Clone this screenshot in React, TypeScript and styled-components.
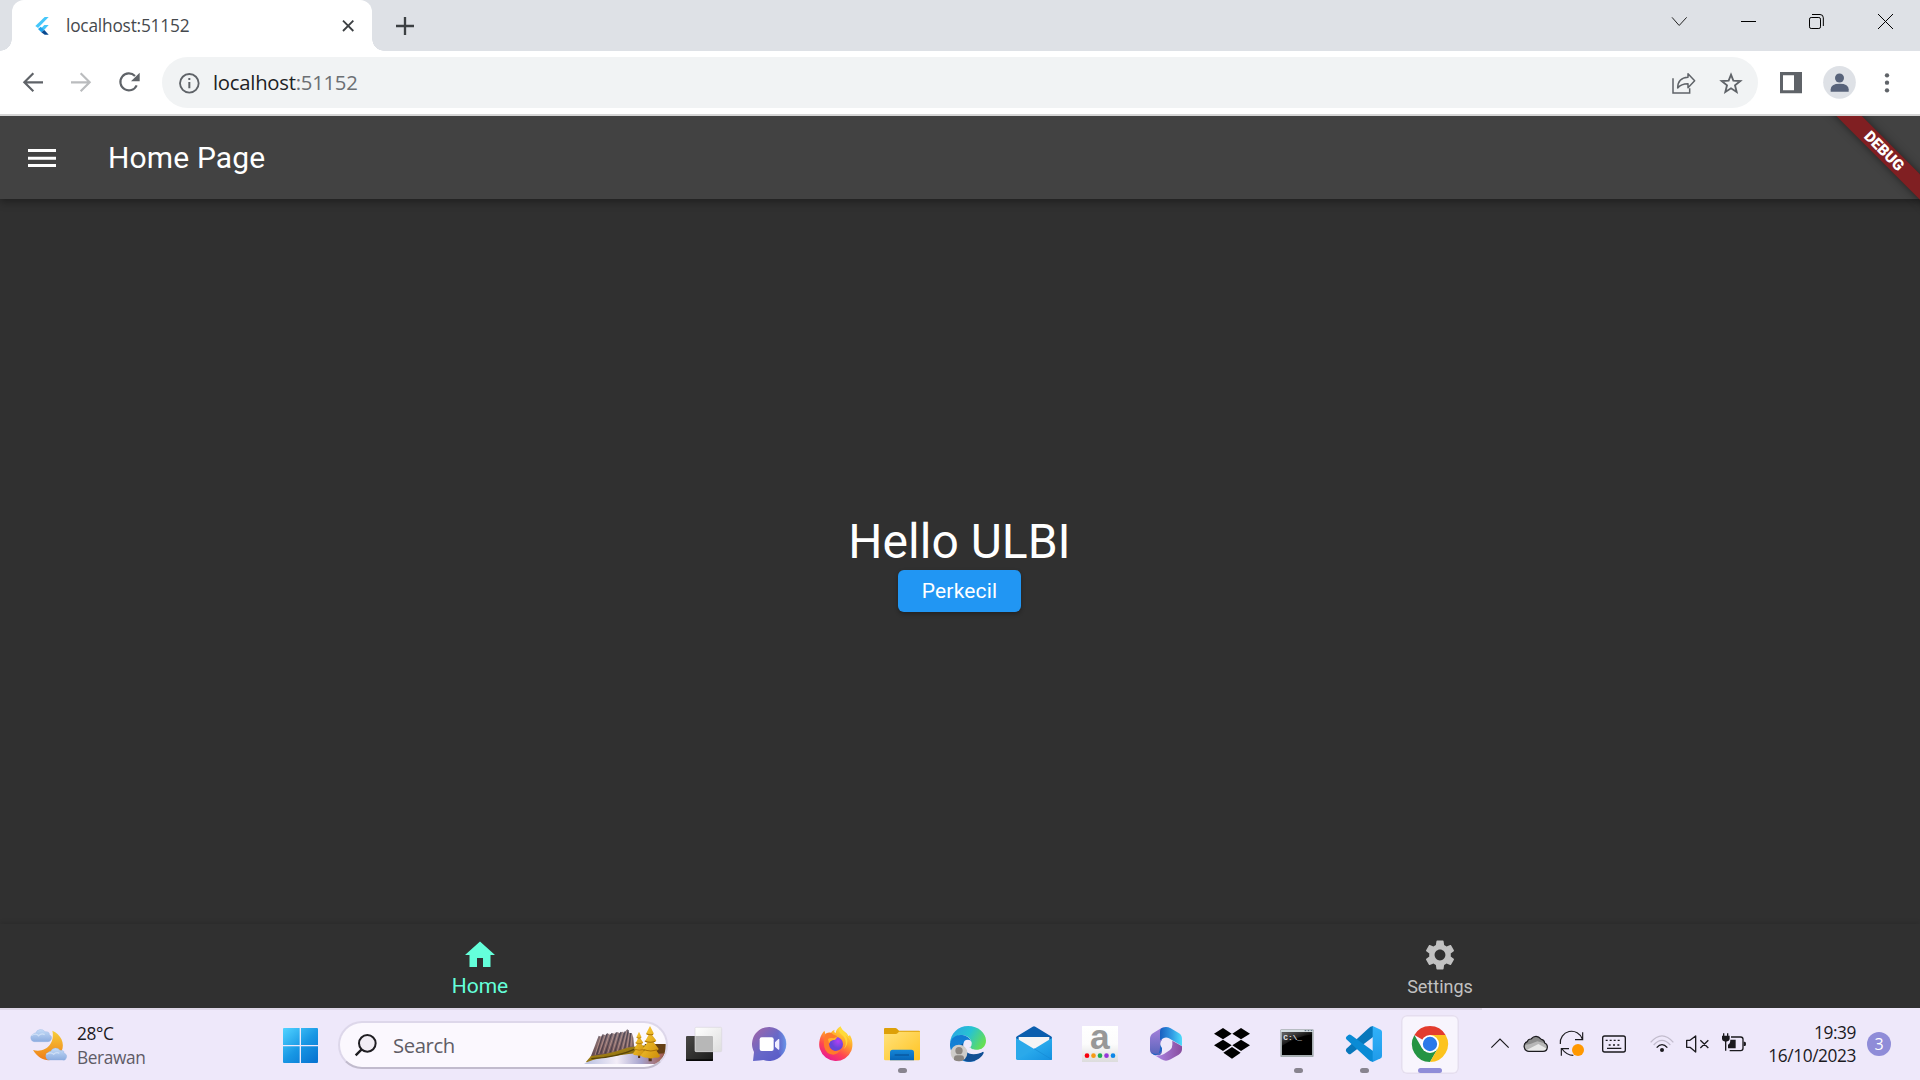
import React from 'react';
import styled, { createGlobalStyle, css } from 'styled-components';

const segoe = css`font-family: 'Open Sans', 'Noto Sans', sans-serif;`;
const roboto = css`font-family: Roboto, 'Liberation Sans', sans-serif;`;

const GlobalStyle = createGlobalStyle`
  * { box-sizing: border-box; }
  body { margin: 0; background: #303030; overflow: hidden; }
  svg { display: block; flex: none; overflow: visible; }
`;

const Screen = styled.div`
  width: 1920px;
  height: 1080px;
  display: flex;
  flex-direction: column;
  overflow: hidden;
`;

/* ---------- browser ---------- */

const TabStrip = styled.div`
  height: 51px;
  flex: none;
  display: flex;
  align-items: flex-start;
  padding-left: 12px;
  background: #dee1e6;
`;

const Tab = styled.div`
  position: relative;
  width: 360px;
  height: 51px;
  display: flex;
  align-items: center;
  padding: 0 12px 0 18px;
  background: #fff;
  border-radius: 12px 12px 0 0;
  &::before, &::after {
    content: '';
    position: absolute;
    bottom: 0;
    width: 12px;
    height: 12px;
  }
  &::before { left: -12px; background: radial-gradient(circle at 0 0, transparent 11.5px, #fff 12px); }
  &::after { right: -12px; background: radial-gradient(circle at 100% 0, transparent 11.5px, #fff 12px); }
`;

const TabTitle = styled.span`
  ${segoe}
  flex: 1;
  margin-left: 12px;
  font-size: 17.3px;
  line-height: 24px;
  letter-spacing: -0.2px;
  color: #45494d;
`;

const NewTab = styled.div`
  height: 51px;
  display: flex;
  align-items: center;
  margin-left: 21px;
`;

const WindowControls = styled.div`
  height: 42px;
  display: flex;
  align-items: center;
  gap: 44.7px;
  margin-left: auto;
  padding-right: 22px;
`;

const Toolbar = styled.div`
  height: 65px;
  flex: none;
  display: flex;
  align-items: center;
  padding: 0 21px;
  background: #fff;
  border-bottom: 2px solid #d5d5d5;
`;

const NavButtons = styled.div`
  display: flex;
  gap: 24px;
`;

const AddressBar = styled.div`
  width: 1596px;
  height: 51px;
  flex: none;
  display: flex;
  align-items: center;
  gap: 24px;
  margin-left: 21px;
  padding: 0 15px;
  border-radius: 26px;
  background: #f1f3f4;
`;

const Url = styled.span`
  ${segoe}
  flex: 1;
  margin-left: -12px;
  padding-bottom: 2px;
  font-size: 20.3px;
  line-height: 28px;
  letter-spacing: -0.25px;
  color: #6b6f73;
`;

const Host = styled.span`color: #202124;`;

const ToolbarActions = styled.div`
  display: flex;
  align-items: center;
  justify-content: space-between;
  width: 120px;
  margin-left: auto;
`;

/* ---------- page ---------- */

const Page = styled.main`
  ${roboto}
  position: relative;
  height: 892px;
  flex: none;
  display: flex;
  flex-direction: column;
  overflow: hidden;
  background: #303030;
`;

const AppBar = styled.header`
  height: 83px;
  flex: none;
  display: flex;
  align-items: center;
  gap: 49px;
  padding-left: 25px;
  background: #424242;
  box-shadow: 0 3px 8px rgba(0, 0, 0, 0.35);
`;

const Title = styled.h1`
  margin: 0;
  font-size: 30px;
  font-weight: 400;
  line-height: 36px;
  letter-spacing: 0.15px;
  color: #fff;
`;

const Content = styled.section`
  flex: 1;
  display: flex;
  flex-direction: column;
  align-items: center;
  justify-content: center;
  padding: 3px 1px 0 0;
`;

const Greeting = styled.div`
  font-size: 48px;
  line-height: 56px;
  color: #fff;
`;

const RaisedButton = styled.button`
  ${roboto}
  width: 123px;
  height: 42px;
  padding: 0;
  border: 0;
  border-radius: 6px;
  background: #2196f3;
  color: #fff;
  font-size: 21px;
  font-weight: 400;
  letter-spacing: 0.15px;
  box-shadow: 0 2px 4px rgba(0, 0, 0, 0.3);
`;

const BottomNav = styled.nav`
  height: 84px;
  flex: none;
  display: flex;
  background: #303030;
  box-shadow: 0 -1px 5px rgba(0, 0, 0, 0.12);
`;

const NavItem = styled.div<{ $active?: boolean }>`
  flex: 1;
  display: flex;
  flex-direction: column;
  align-items: center;
  padding-top: 13px;
  color: ${(p) => (p.$active ? '#64ffda' : '#c1c1c1')};
  font-size: ${(p) => (p.$active ? 21 : 18)}px;
  line-height: ${(p) => (p.$active ? 26 : 28)}px;
`;

const DebugBanner = styled.div`
  position: absolute;
  top: 26px;
  right: -64px;
  width: 200px;
  height: 18.4px;
  transform: rotate(45deg);
  background: #801f22;
  box-shadow: 0 0 9px rgba(0, 0, 0, 0.5);
  color: #fff;
  font-size: 15.3px;
  font-weight: 900;
  line-height: 18.4px;
  text-align: center;
`;

/* ---------- taskbar ---------- */

const Taskbar = styled.footer`
  ${segoe}
  height: 72px;
  flex: none;
  display: flex;
  align-items: center;
  background: linear-gradient(90deg, #ddd6e7 1482px, transparent 1482px) top / 100% 2px no-repeat #eee8fa;
  color: #1b1a1e;
`;

const Weather = styled.div`
  width: 283px;
  display: flex;
  align-items: center;
  gap: 11px;
  padding: 1px 0 0 30px;
`;

const Lines = styled.div<{ $right?: boolean }>`
  display: flex;
  flex-direction: column;
  margin-top: 2px;
  font-size: 17.3px;
  line-height: 24px;
  letter-spacing: -0.4px;
  text-align: ${(p) => (p.$right ? 'right' : 'left')};
`;

const Muted = styled.span`color: #5e5b66;`;

const Start = styled.div`padding-top: 2px;`;

const SearchBox = styled.div`
  width: 330px;
  height: 48px;
  display: flex;
  align-items: center;
  margin: 1px 7px 0 20px;
  padding-left: 14px;
  overflow: hidden;
  border: 2px solid #ddd7ea;
  border-bottom-color: #c1bbcd;
  border-radius: 24px;
  background: #fbf8fe;
`;

const SearchLabel = styled.span`
  flex: 1;
  margin-left: 15px;
  font-size: 20.3px;
  letter-spacing: -0.4px;
  color: #5f5d65;
`;

const Apps = styled.div`
  display: flex;
  gap: 8px;
`;

const AppTile = styled.div<{ $active?: boolean }>`
  width: 58px;
  height: 59px;
  display: flex;
  flex-direction: column;
  align-items: center;
  gap: 6px;
  margin-top: 1px;
  padding-top: 11px;
  border-radius: 6px;
  background: ${(p) => (p.$active ? '#f8f5fd' : 'transparent')};
  box-shadow: ${(p) => (p.$active ? 'inset 0 0 0 1.5px #e5deef' : 'none')};
`;

const Indicator = styled.div<{ $active?: boolean }>`
  width: ${(p) => (p.$active ? 24 : 9)}px;
  height: 5px;
  border-radius: 3px;
  background: ${(p) => (p.$active ? '#8f8cd8' : '#88848f')};
`;

const Tray = styled.div`
  display: flex;
  align-items: center;
  margin-left: auto;
  padding-right: 29px;
`;

const TrayGroup = styled.div<{ $gap: number; $after: number }>`
  display: flex;
  gap: ${(p) => p.$gap}px;
  margin-right: ${(p) => p.$after}px;
`;

const Clock = styled(Lines)`
  width: 110px;
  line-height: 23px;
  margin-top: 0;
`;

const Badge = styled.div`
  width: 24px;
  height: 24px;
  margin-left: 11px;
  border-radius: 50%;
  background: #8f8cd8;
  color: #fff;
  font-size: 16px;
  line-height: 24px;
  text-align: center;
`;

/* ---------- drawings: three user units per pixel ---------- */

type GlyphProps = { x: number; y: number; size?: number; children: React.ReactNode };

const Glyph = ({ x, y, size = 24, children }: GlyphProps) => (
  <svg width={size} height={size} viewBox={`${x} ${y} ${size * 3} ${size * 3}`} fill="none">
    {children}
  </svg>
);

const Grad = ({ id, a, b, m, v }: { id: string; a: string; b: string; m?: string; v?: boolean }) => (
  <linearGradient id={id} x1="0" y1="0" x2={v ? '0' : '1'} y2="1">
    <stop stopColor={a} />
    {m && <stop offset=".5" stopColor={m} />}
    <stop offset="1" stopColor={b} />
  </linearGradient>
);

const Meet = () => (
  <Glyph x={246} y={81} size={36}>
    <Grad id="meet" a="#a765a4" m="#6768c8" b="#5558c8" />
    <linearGradient id="meetR" x1="0" x2="1"><stop offset=".5" stopColor="#6da4f0" stopOpacity="0" /><stop offset="1" stopColor="#6da4f0" stopOpacity=".8" /></linearGradient>
    <path d="M298 84a51 51 0 1 1-18 99q-8 2-31 3l3-27A51 51 0 0 1 298 84z" fill="url(#meet)" />
    <path d="M298 84a51 51 0 0 1 51 51q0 20-15 35L298 135z" fill="url(#meetR)" />
    <rect x="269" y="115" width="42" height="41" rx="6" fill="#fff" />
    <path d="M315 130l10-10q3-1 3 2v28q0 3-3 2l-10-9z" fill="#f0edff" />
  </Glyph>
);

const Desktops = () => (
  <Glyph x={48} y={81} size={36}>
    <Grad id="tvDark" a="#484745" b="#1b1b1b" />
    <Grad id="tvLight" a="#ffffff" b="#dedede" />
    <rect x="48" y="111" width="81" height="75" rx="3" fill="url(#tvDark)" />
    <path d="M48 181h81v2q0 3-3 3H51q-3 0-3-3z" fill="#080808" />
    <rect x="75" y="85" width="80" height="73" rx="3" fill="url(#tvLight)" stroke="#dad8dc" strokeWidth="2" />
    <path d="M76 111h50q3 0 3 3v43H76z" fill="#b7b7b7" />
  </Glyph>
);

const Firefox = () => (
  <Glyph x={444} y={81} size={36}>
    <linearGradient id="ffBody" x1=".8" y1="0" x2=".25" y2="1"><stop stopColor="#fff044" /><stop offset=".38" stopColor="#ffa52a" /><stop offset=".68" stopColor="#ff4650" /><stop offset="1" stopColor="#e6159b" /></linearGradient>
    <radialGradient id="ffGlobe" cx=".65" cy=".3"><stop stopColor="#b13ff5" /><stop offset="1" stopColor="#6745d8" /></radialGradient>
    <path d="M463 95c2 4 2 7 3 10q8-5 17-4c2-5 8-8 11-9-3 6-1 8 3 10 1-9 7-16 15-20 2 11 11 14 18 21q3 3 5 8l5-2c8 13 10 31 4 46a50 50 0 0 1-94-4c-6-20 0-41 13-56z" fill="url(#ffBody)" />
    <circle cx="498" cy="135" r="21" fill="url(#ffGlobe)" />
    <path d="M467 105q8-5 17-3 5 6 17 9 0 7-9 9l-8 1q-5 6-7 15 0 16 16 20 12 1 19-5-6 15-22 16-22-1-27-22-4-23 4-40z" fill="#ff7a2b" />
    <path d="M474 120q7-5 17-2l10-5q-2 10-12 10-9 2-12 10z" fill="#ffb22e" />
    <path d="M512 83c-10 11-2 20 5 26 13 12 14 30 3 42 17-12 14-33 5-43 12 7 17 15 17 25 4-23-24-30-30-50z" fill="#ffde3b" opacity=".8" />
  </Glyph>
);

const Folder = () => (
  <Glyph x={642} y={81} size={36}>
    <Grad id="fold" a="#ffe27b" b="#ffc322" />
    <Grad id="foldBlue" a="#1587d8" b="#0765b7" v />
    <path d="M642 90q0-3 3-3h31q3 0 5 2l6 6h60q3 0 3 3v15H642z" fill="#dda008" />
    <path d="M642 105h35q4 0 7-4l3-3h63v82q0 4-4 4H646q-4 0-4-4z" fill="url(#fold)" />
    <path d="M660 184v-24q0-8 8-8h56q8 0 8 8v24z" fill="url(#foldBlue)" />
    <path d="M674 168h43" stroke="#074b8d" strokeWidth="3" />
  </Glyph>
);

const Edge = () => (
  <Glyph x={60} y={81} size={36}>
    <linearGradient id="edTop" x1="0" y1=".2" x2="1" y2=".6"><stop stopColor="#2aa4e5" /><stop offset=".5" stopColor="#27c3d2" /><stop offset="1" stopColor="#66df52" /></linearGradient>
    <Grad id="edMid" a="#117bd1" b="#1489de" v />
    <path d="M60 134c1-31 25-53 54-53 31 0 54 21 54 44 0 17-13 28-30 28-14 0-22-5-18-11 9-12 2-27-14-32-19-5-37 5-46 24z" fill="url(#edTop)" />
    <path d="M60 134c4-20 20-28 36-26 14 1 25 10 28 21-13-9-26 0-24 12 2 18 20 29 42 28l-8 18c-44 7-76-18-74-53z" fill="url(#edMid)" />
    <path d="M100 132c-6 20 11 34 31 34 12 0 21-4 26-7 4-2 5 1 3 5-9 16-27 24-44 24-15 0-29-13-29-30 0-12 4-21 13-26z" fill="#114f94" />
    <circle cx="113" cy="134" r="12" fill="#eee8fa" />
    <path d="M120 143c4 8 14 11 26 9 8-1 14-4 19-8 0 8-4 14-10 16-12 5-27 4-36-4z" fill="#eee8fa" />
    <circle cx="87" cy="162" r="25" fill="#cfccc9" />
    <circle cx="87" cy="155" r="11" fill="#8c8681" />
    <path d="M72 183v-5q0-9 9-9h12q9 0 9 9v5q-15 8-30 0z" fill="#8c8681" />
  </Glyph>
);

const Mail = () => (
  <Glyph x={258} y={81} size={36}>
    <Grad id="mailA" a="#3cc1f7" b="#1490df" />
    <path d="M258 117q0-3 3-5l47-29q4-3 8 0l47 29q3 2 3 5v20H258z" fill="#0b5eae" />
    <path d="M266 114h92v34h-92z" fill="#f5f4f5" />
    <path d="M258 117l108 65H262q-4 0-4-4z" fill="#2ba9ea" />
    <path d="M366 117l-54 33-54 33h104q4 0 4-4z" fill="url(#mailA)" />
    <path d="M312 149l54 33" stroke="#1589d3" strokeWidth="2" />
  </Glyph>
);

const LetterA = styled.text`
  font-family: 'Liberation Sans', Arial, sans-serif;
  font-size: 106px;
  font-weight: 700;
  fill: #989898;
`;

const Shop = () => (
  <Glyph x={456} y={81} size={36}>
    <Grad id="shop" a="#ffffff" m="#fcfcfc" b="#dcdcdc" v />
    <path d="M456 81h108v108H456z" fill="url(#shop)" />
    <LetterA x="480" y="150">a</LetterA>
    {['#f8000c', '#f69a13', '#20ad55', '#9637d8', '#0c87e8'].map((c, i) => (
      <circle key={c} cx={471 + i * 19.5} cy="170" r="7" fill={c} />
    ))}
  </Glyph>
);

const Office = () => (
  <Glyph x={654} y={81} size={36}>
    <Grad id="ofA" a="#a881dc" b="#5865bb" v />
    <linearGradient id="ofB" x1="0" x2="1"><stop stopColor="#175fc0" /><stop offset=".55" stopColor="#329ce4" /><stop offset="1" stopColor="#50dcfa" /></linearGradient>
    <linearGradient id="ofC" x1="0" x2="1"><stop stopColor="#ad87e7" /><stop offset="1" stopColor="#884c9e" /></linearGradient>
    <path d="M708 84q-8 0-15 4l-23 14q-10 6-10 17v33q0 10 9 14l18 3q9-3 9-14V88z" fill="url(#ofA)" />
    <path d="M664 160q10 8 23 3 9-4 9-13v-15l-6 3v8q0 17-13 23-7 0-13-9z" fill="#2065c4" />
    <path d="M708 84q7 0 14 4l24 14q10 6 10 17v22l-39-23q-9-5-17 0l-10 6v-26q0-10 8-12 5-2 10-2z" fill="url(#ofB)" />
    <path d="M727 125l29 17v9q0 10-10 16l-24 14q-14 8-28 0l-20-12q17 2 28-4l18-12q7-5 7-16z" fill="url(#ofC)" />
    <circle cx="708" cy="135" r="17" fill="#eee8fa" />
  </Glyph>
);

const Dropbox = () => (
  <Glyph x={42} y={81} size={36}>
    <path d="M69 87l26 17-26 17-27-17zM123 87l27 17-27 17-26-17zM69 122l26 17-26 17-27-17zM123 122l27 17-27 17-26-17zM96 144l26 17-26 18-26-18z" fill="#000" />
  </Glyph>
);

const PromptText = styled.text`
  font-family: 'Liberation Mono', monospace;
  font-size: 22px;
  font-weight: 700;
  fill: #e6e6e6;
`;

const Terminal = () => (
  <Glyph x={240} y={81} size={36}>
    <Grad id="cmd" a="#696969" m="#151515" b="#000000" />
    <rect x="241" y="91" width="100" height="83" rx="3" fill="#a5adb0" />
    <path d="M243 93h96v6h-96z" fill="#d5dee2" />
    <path d="M314 95h5m4 0h5m4 0h5" stroke="#4f6477" strokeWidth="3" />
    <path d="M246 100h90v68h-90z" fill="#000" />
    <path d="M246 100h90v6q-45 6-90 34z" fill="url(#cmd)" />
    <PromptText x="250" y="122" textLength="56" lengthAdjust="spacingAndGlyphs">C:\_</PromptText>
  </Glyph>
);

const VsCode = () => (
  <Glyph x={438} y={81} size={36}>
    <Grad id="vsr" a="#31b2fa" b="#209be9" v />
    <path d="M439 149l65-60q7-7 15-8v33l-66 50q-4 3-8 0l-6-6q-3-4 0-9z" fill="#0877bb" />
    <path d="M439 121l65 60q7 8 15 8v-33l-66-48q-4-3-8 0l-6 5q-3 4 0 8z" fill="#0a8bd5" />
    <path d="M518 81l24 11q4 2 4 7v72q0 5-4 7l-24 11z" fill="url(#vsr)" />
  </Glyph>
);

const Chrome = () => (
  <Glyph x={636} y={81} size={36}>
    <path d="M690 135L643.200 108A54 54 0 0 1 736.800 108z" fill="#e33b2e" />
    <path d="M643.200 108A54 54 0 0 0 690 189L713.400 148.500 666.600 148.500z" fill="#249443" />
    <path d="M690 108h46.800A54 54 0 0 1 690 189L713.400 148.500z" fill="#fcc31e" />
    <circle cx="690" cy="135" r="27" fill="#fff" />
    <circle cx="690" cy="135" r="21.500" fill="#2b79e9" />
  </Glyph>
);

const apps = [
  { name: 'desktops', Icon: Desktops },
  { name: 'meet', Icon: Meet },
  { name: 'firefox', Icon: Firefox },
  { name: 'folder', Icon: Folder, open: true },
  { name: 'edge', Icon: Edge },
  { name: 'mail', Icon: Mail },
  { name: 'shop', Icon: Shop },
  { name: 'office', Icon: Office },
  { name: 'dropbox', Icon: Dropbox },
  { name: 'terminal', Icon: Terminal, open: true },
  { name: 'vscode', Icon: VsCode, open: true },
  { name: 'chrome', Icon: Chrome, open: true, active: true },
];

const WeatherIcon = () => (
  <Glyph x={90} y={78} size={36}>
    <Grad id="moon" a="#f6cf3a" b="#ef7d18" v />
    <Grad id="cloud" a="#c5dcf8" b="#8cacdf" v />
    <path d="M157 89c25 10 39 38 28 61-14 32-59 42-86-3 39 10 67-21 58-58z" fill="url(#moon)" />
    <path d="M102 122a12 12 0 0 1-2-23q3-3 7-3a16 16 0 0 1 28-4q14-1 13 9a11 11 0 0 1-6 21z" fill="url(#cloud)" stroke="#8caee2" strokeWidth="1" />
    <path d="M147 177a12 12 0 0 1-2-23q3-3 7-3a16 16 0 0 1 28-3q14-1 12 9a10 10 0 0 1-5 20z" fill="url(#cloud)" stroke="#8caee2" strokeWidth="1" />
    <path d="M94 104q13-9 22 0 8-9 18-3M139 160q13-9 22 0 8-8 17-3" stroke="#e4effc" strokeWidth="4" opacity=".6" />
  </Glyph>
);

const StartIcon = () => (
  <Glyph x={849} y={84} size={35}>
    <linearGradient id="win" gradientUnits="userSpaceOnUse" x1="852" y1="86" x2="940" y2="186"><stop stopColor="#4fd1ff" /><stop offset=".55" stopColor="#1897e4" /><stop offset="1" stopColor="#0876d2" /></linearGradient>
    <path d="M852 84h47v51h-50V87q0-3 3-3zM903 84h48q3 0 3 3v48h-51zM849 139h50v50h-47q-3 0-3-3zM903 139h51v47q0 3-3 3h-48z" fill="url(#win)" />
  </Glyph>
);

const Tree = ({ x, y, sx, sy }: { x: number; y: number; sx: number; sy: number }) => (
  <g transform={`translate(${x} ${y}) scale(${sx} ${sy})`}>
    <path d="M-4 88h9v16h-9z" fill="#53321c" />
    <path d="M0 0l11 22q-3 4-6 3l13 18q-3 5-8 4l15 21q-3 5-7 4l11 16q-5 7-16 5-10 5-22 0-13 1-18-6l13-16q-7 1-7-3l14-20q-6 1-7-3L-4 26q-5 1-7-4z" fill="url(#tree)" />
    <path d="M-10 23q10 5 19 1M-15 44q15 7 30 1M-19 69q20 8 40 1" stroke="#a87008" strokeWidth="3" />
  </g>
);

const Landscape = () => (
  <svg width="82" height="40" viewBox="763 81 246 120" fill="none">
    <Grad id="tree" a="#ffd33b" b="#cc8c08" />
    <Grad id="rock" a="#77707c" m="#83686a" b="#5a4046" v />
    <Grad id="grass" a="#c59a1c" b="#625009" />
    <linearGradient id="snow" x1="0" x2="1"><stop stopColor="#b7bfe1" /><stop offset=".4" stopColor="#f3edf8" /><stop offset=".7" stopColor="#a5a2cc" /><stop offset="1" stopColor="#a45543" /></linearGradient>
    <path d="M780 184l14-36 8-22 5-13 7 3 5-8 8 4 6-7 7 5 7-5 8 3 7-6 8 4 7-5 7 3 9-11 6 12 7 0 5 14 3 30-50 12-50 12z" fill="url(#rock)" />
    <path d="M796 172l18-58M807 168l20-58M820 167l19-60M834 166l20-62M849 163l17-60M863 159l17-58M878 155l14-58M892 150l7-44M904 145l3-36" stroke="#d1a69b" strokeWidth="3" opacity=".6" />
    <path d="M801 169l18-56M813 166l19-58M827 166l19-60M842 163l18-60M856 160l17-58M870 157l16-57M885 152l11-56M898 147l5-42" stroke="#3f3541" strokeWidth="3.500" opacity=".7" />
    <path d="M768 193l16-19q48-4 88-18 34-14 133-18v55z" fill="url(#grass)" />
    <path d="M945 138h63v44h-50z" fill="#654016" />
    <path d="M763 198q21-14 65-20 50-8 90-12 45 4 91 0v32H763z" fill="url(#snow)" />
    <path d="M785 182q75-3 136-31" stroke="#594508" strokeWidth="4" />
    <Tree x={928} y={101} sx={0.7} sy={0.76} />
    <Tree x={961} y={84} sx={1.05} sy={1.02} />
  </svg>
);

const App = () => (
  <Screen>
    <GlobalStyle />
    <TabStrip>
      <Tab>
        <Glyph x={90} y={42}>
          <path d="M134 51h12l-32 33-8-6z" fill="#45c7fa" />
          <path d="M133 75h13l-13 14-12-1z" fill="#45c7fa" />
          <path d="M114 87l8-7 11 10-9 7z" fill="#20a4ed" />
          <path d="M124 97l9-7 13 14h-12z" fill="#07488f" />
        </Glyph>
        <TabTitle>localhost:51152</TabTitle>
        <Glyph x={1008} y={41}><path d="M1029 61l31 31m0-31l-31 31" stroke="#3c4043" strokeWidth="5.500" /></Glyph>
      </Tab>
      <NewTab>
        <Glyph x={1179} y={41}><path d="M1215 50v54m-27-27h54" stroke="#3c4043" strokeWidth="7" /></Glyph>
      </NewTab>
      <WindowControls>
        <Glyph x={204} y={27}><path d="M216 52l21 24h1l22-24" stroke="#222" strokeWidth="3" /></Glyph>
        <Glyph x={408} y={27}><path d="M420 64.500h45" stroke="#000" strokeWidth="3" /></Glyph>
        <Glyph x={615} y={27}>
          <rect x="628.500" y="52.500" width="33" height="33" rx="5" stroke="#000" strokeWidth="3" />
          <path d="M636 43.500h24q10 0 10 10V78" stroke="#000" strokeWidth="3" />
        </Glyph>
        <Glyph x={822} y={27}><path d="M834 42l45 45m0-45l-45 45" stroke="#000" strokeWidth="3" /></Glyph>
      </WindowControls>
    </TabStrip>

    <Toolbar>
      <NavButtons>
        <Glyph x={63} y={213}><path d="M129 247H73m27-27l-27 27 27 27" stroke="#5f6368" strokeWidth="6.500" /></Glyph>
        <Glyph x={207} y={213}><path d="M213 247h56m-27-27l27 27-27 27" stroke="#babcbe" strokeWidth="6.500" /></Glyph>
        <Glyph x={352} y={213}>
          <path d="M411 256a25.500 25.500 0 1 1-5-28" stroke="#5f6368" strokeWidth="6.500" />
          <path d="M420 218v26h-26z" fill="#5f6368" />
        </Glyph>
      </NavButtons>
      <AddressBar>
        <Glyph x={531} y={213}>
          <circle cx="568" cy="250" r="28" stroke="#5f6368" strokeWidth="5.500" />
          <path d="M568 246v19m0-31v6" stroke="#5f6368" strokeWidth="6" />
        </Glyph>
        <Url><Host>localhost</Host>:51152</Url>
        <Glyph x={213} y={213}>
          <path d="M219 235v44h50v-14" stroke="#5f6368" strokeWidth="4.500" />
          <path d="M233 264q0-30 31-32v-11l20 21-20 21v-12q-21 0-31 13z" stroke="#5f6368" strokeWidth="4.500" strokeLinejoin="round" />
        </Glyph>
        <Glyph x={357} y={213}>
          <path d="M393 224l7 18 21 1-16 13 5 20-17-11-17 11 5-20-16-13 21-1z" stroke="#5f6368" strokeWidth="5.500" />
        </Glyph>
      </AddressBar>
      <ToolbarActions>
        <Glyph x={537} y={212}><path d="M540 215h66v64h-66zM549 225v45h33v-45z" fill="#5f6368" fillRule="evenodd" /></Glyph>
        <Glyph x={669} y={198} size={33}>
          <circle cx="718.500" cy="247" r="49" fill="#dee1e6" />
          <circle cx="718.500" cy="234" r="13.500" fill="#58637a" />
          <path d="M692 275v-7q0-17 27-17t27 17v7z" fill="#58637a" />
        </Glyph>
        <Glyph x={825} y={212}>
          {[225, 247, 270].map((cy) => <circle key={cy} cx="861" cy={cy} r="6.500" fill="#5f6368" />)}
        </Glyph>
      </ToolbarActions>
    </Toolbar>

    <Page>
      <AppBar>
        <Glyph x={75} y={420} size={34}><path d="M84 448.500h84M84 471.500h84M84 493.500h84" stroke="#fff" strokeWidth="9" /></Glyph>
        <Title>Home Page</Title>
      </AppBar>
      <Content>
        <Greeting>Hello ULBI</Greeting>
        <RaisedButton>Perkecil</RaisedButton>
      </Content>
      <BottomNav>
        <NavItem $active>
          <svg width="36" height="36" viewBox="0 0 24 24"><path d="M10 20v-6h4v6h5v-8h3L12 3 2 12h3v8z" fill="currentColor" /></svg>
          Home
        </NavItem>
        <NavItem>
          <svg width="36" height="36" viewBox="0 0 24 24"><path d="M19.140 12.940c.04-.3.060-.61.060-.94 0-.32-.02-.64-.07-.94l2.030-1.580c.18-.14.230-.41.120-.61l-1.920-3.320c-.12-.22-.37-.29-.59-.22l-2.390.96c-.5-.38-1.030-.7-1.620-.94l-.36-2.540c-.04-.24-.24-.41-.48-.41h-3.840c-.24 0-.43.170-.47.410l-.36 2.540c-.59.240-1.130.570-1.620.940l-2.390-.96c-.22-.08-.47 0-.59.220L2.740 8.870c-.12.210-.08.470.120.610l2.030 1.580c-.05.300-.09.630-.09.940s.02.640.070.940l-2.030 1.580c-.18.140-.23.410-.12.610l1.920 3.320c.12.220.37.290.59.220l2.390-.96c.5.380 1.030.700 1.620.940l.36 2.540c.05.240.24.410.48.410h3.840c.24 0 .44-.17.470-.41l.36-2.540c.59-.24 1.130-.56 1.620-.94l2.390.960c.22.080.47 0 .59-.22l1.920-3.320c.12-.22.070-.47-.12-.61l-2.010-1.580zM12 15.600c-1.980 0-3.600-1.620-3.600-3.600s1.620-3.600 3.600-3.600 3.600 1.620 3.600 3.600-1.620 3.600-3.600 3.600z" fill="currentColor" /></svg>
          Settings
        </NavItem>
      </BottomNav>
      <DebugBanner>DEBUG</DebugBanner>
    </Page>

    <Taskbar>
      <Weather>
        <WeatherIcon />
        <Lines><span>28°C</span><Muted>Berawan</Muted></Lines>
      </Weather>
      <Start><StartIcon /></Start>
      <SearchBox>
        <Glyph x={76} y={99}>
          <circle cx="116" cy="130" r="25" fill="#f1edf4" stroke="#1f1e22" strokeWidth="6" />
          <path d="M99 148l-18 18" stroke="#1f1e22" strokeWidth="7" />
        </Glyph>
        <SearchLabel>Search</SearchLabel>
        <Landscape />
      </SearchBox>
      <Apps>
        {apps.map(({ name, Icon, open, active }) => (
          <AppTile key={name} $active={active}>
            <Icon />
            {open && <Indicator $active={active} />}
          </AppTile>
        ))}
      </Apps>
      <Tray>
        <TrayGroup $gap={12} $after={18}>
          <Glyph x={54} y={96}><path d="M64 143l26-26 26 26" stroke="#1b1a1e" strokeWidth="3.500" /></Glyph>
          <Glyph x={162} y={96}>
            <path d="M177 154a15 15 0 0 1-5-29q2-8 11-8 15-16 31 1 9 1 10 11 9 4 8 13-1 12-13 12z" fill="#8b8b8b" />
            <path d="M177 154a13 13 0 0 1-10-20l14-2 21-8 22 6q9 4 8 12-1 12-13 12z" fill="#b7b7b7" />
            <path d="M170 150l35-18 26 14q-3 8-12 8h-42z" fill="#e8e8e8" />
            <path d="M177 154a15 15 0 0 1-5-29q2-8 11-8 15-16 31 1 9 1 10 11 9 4 8 13-1 12-13 12z" stroke="#1b1a1e" strokeWidth="3.500" />
          </Glyph>
          <Glyph x={270} y={96}>
            <path d="M271 132a34 34 0 0 1 66-15M338 97v22h-23M310 166q-20 0-34-19M274 167v-21h23" stroke="#1b1a1e" strokeWidth="3.500" />
            <circle cx="324" cy="150" r="18" fill="#ff9800" />
          </Glyph>
        </TrayGroup>
        <TrayGroup $gap={0} $after={24}>
          <Glyph x={396} y={94}>
            <rect x="398" y="106" width="68" height="48" rx="6" stroke="#1b1a1e" strokeWidth="4" />
            <path d="M407 119h6m6 0h6m6 0h6m6 0h6M416 133h6m7 0h6m7 0h6M411 143h43" stroke="#1b1a1e" strokeWidth="4" />
          </Glyph>
        </TrayGroup>
        <TrayGroup $gap={12} $after={0}>
          <Glyph x={540} y={96}>
            <path d="M542 127q34-39 68 0M551 135q25-28 50 0" stroke="#c2bccd" strokeWidth="4" />
            <path d="M560 143q16-18 32 0" stroke="#1b1a1e" strokeWidth="4" />
            <circle cx="576" cy="150" r="6" fill="#1b1a1e" />
          </Glyph>
          <Glyph x={648} y={96}>
            <path d="M650 121h10l17-13v48l-17-14h-10zM691 121l24 23m0-23l-24 23" stroke="#1b1a1e" strokeWidth="4" strokeLinejoin="round" />
          </Glyph>
          <Glyph x={756} y={96}>
            <path d="M783 111h29q7 0 7 7v27q0 7-7 7h-33" stroke="#1b1a1e" strokeWidth="4" />
            <path d="M821 125h3q4 0 4 7t-4 6h-3zM781 119h16v26h-23v-11q7-3 7-15z" fill="#1b1a1e" />
            <path d="M761 100v10m12-10v10m-6 10v32" stroke="#1b1a1e" strokeWidth="4" />
            <path d="M756 107h23v8q0 10-12 10-11 0-11-10z" fill="#1b1a1e" />
          </Glyph>
        </TrayGroup>
        <Clock $right><span>19:39</span><span>16/10/2023</span></Clock>
        <Badge>3</Badge>
      </Tray>
    </Taskbar>
  </Screen>
);

export default App;
